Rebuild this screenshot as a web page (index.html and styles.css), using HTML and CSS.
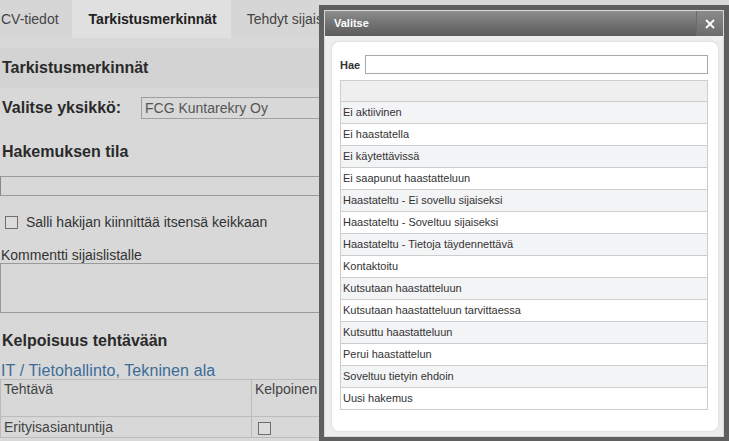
FILE: index.html
```html
<!DOCTYPE html>
<html lang="fi">
<head>
<meta charset="utf-8">
<title>Tarkistusmerkinnät</title>
<link rel="stylesheet" href="styles.css">
</head>
<body>
<div class="page">
  <nav class="tabs">
    <div class="tab first">CV-tiedot</div>
    <div class="tab active">Tarkistusmerkinnät</div>
    <div class="tab">Tehdyt sijaisuudet</div>
  </nav>
  <h2 class="section-title">Tarkistusmerkinnät</h2>
  <div class="unit-row">
    <span class="unit-label">Valitse yksikkö:</span>
    <div class="select">FCG Kuntarekry Oy</div>
  </div>
  <h3 class="heading status-heading">Hakemuksen tila</h3>
  <div class="text-input"></div>
  <div class="check-row"><span class="checkbox"></span><span>Salli hakijan kiinnittää itsensä keikkaan</span></div>
  <div class="field-label">Kommentti sijaislistalle</div>
  <div class="textarea"></div>
  <h3 class="heading qual-heading">Kelpoisuus tehtävään</h3>
  <div class="link">IT / Tietohallinto, Tekninen ala</div>
  <table class="tasks">
    <tr class="head"><td class="c1">Tehtävä</td><td class="c2">Kelpoinen</td></tr>
    <tr class="row"><td class="c1">Erityisasiantuntija</td><td class="c2"><span class="checkbox"></span></td></tr>
  </table>
</div>

<div class="dialog">
  <div class="dialog-inner">
    <div class="titlebar">
      <span class="title">Valitse</span>
      <span class="close"><svg width="10" height="10" viewBox="0 0 10 10"><path d="M1 1 L9 9 M9 1 L1 9" stroke="#ffffff" stroke-width="1.8" fill="none"/></svg></span>
    </div>
    <div class="dialog-body">
      <div class="panel">
        <div class="search-row">
          <span class="search-label">Hae</span>
          <div class="search-input"></div>
        </div>
        <div class="list">
          <div class="list-head"></div>
          <div class="item">Ei aktiivinen</div>
          <div class="item">Ei haastatella</div>
          <div class="item">Ei käytettävissä</div>
          <div class="item">Ei saapunut haastatteluun</div>
          <div class="item">Haastateltu - Ei sovellu sijaiseksi</div>
          <div class="item">Haastateltu - Soveltuu sijaiseksi</div>
          <div class="item">Haastateltu - Tietoja täydennettävä</div>
          <div class="item">Kontaktoitu</div>
          <div class="item">Kutsutaan haastatteluun</div>
          <div class="item">Kutsutaan haastatteluun tarvittaessa</div>
          <div class="item">Kutsuttu haastatteluun</div>
          <div class="item">Perui haastattelun</div>
          <div class="item">Soveltuu tietyin ehdoin</div>
          <div class="item">Uusi hakemus</div>
        </div>
      </div>
    </div>
  </div>
</div>
</body>
</html>
```

FILE: styles.css
```css
* { box-sizing: border-box; }
html, body { margin: 0; padding: 0; }
body {
  width: 729px;
  height: 441px;
  overflow: hidden;
  position: relative;
  background: #d8d8d8;
  font-family: "Liberation Sans", Arial, sans-serif;
  color: #333;
}
.page { width: 319px; overflow: hidden; }

.tabs { display: flex; height: 38px; background: #d6d6d6; }
.tab { padding: 0 16px; line-height: 38px; font-size: 14px; color: #444; white-space: nowrap; }
.tab.first { padding: 0 13px 0 1px; }
.tab.active { background: #e0e0e0; font-weight: bold; color: #222; padding: 0 14px 0 17px; }

.section-title {
  margin: 10px 0 0;
  height: 40px;
  line-height: 40px;
  font-size: 16px;
  font-weight: bold;
  padding-left: 2px;
  background: #d3d3d3;
  color: #2a2a2a;
}

.unit-row { display: flex; align-items: center; margin-top: 9px; height: 22px; }
.unit-label { font-size: 16px; font-weight: bold; padding-left: 2px; width: 141px; flex: none; color: #2a2a2a; }
.select {
  flex: none;
  width: 320px; height: 22px; border: 1px solid #a0a0a0;
  font-size: 14px; color: #555; line-height: 20px; padding-left: 3px;
}

.heading { margin: 0; font-size: 16px; font-weight: bold; line-height: 20px; padding-left: 2px; color: #2a2a2a; }
.status-heading { margin-top: 23px; }
.text-input { margin-top: 14px; width: 500px; height: 20px; border: 1px solid #9a9a9a; border-left-color: #888; }

.check-row { display: flex; align-items: center; margin-top: 19px; height: 14px; font-size: 14px; color: #333; }
.check-row .checkbox { margin: 0 8px 0 5px; flex: none; }
.checkbox { display: inline-block; width: 13px; height: 13px; border: 1px solid #6e6e6e; background: #dcdcdc; }

.field-label { margin-top: 18px; font-size: 14px; line-height: 16px; padding-left: 1px; color: #333; }
.textarea { width: 500px; height: 50px; border: 1px solid #9a9a9a; }

.qual-heading { margin-top: 18px; }
.link { margin-top: 11px; font-size: 16px; line-height: 17px; color: #3b6c98; padding-left: 1px; letter-spacing: 0.1px; }

.tasks { border-collapse: collapse; width: 500px; font-size: 14px; color: #444; }
.tasks td { border: 1px solid #bcbcbc; padding: 0 3px; }
.tasks .c1 { width: 251px; }
.tasks .head td { height: 37px; vertical-align: top; padding-top: 1px; }
.tasks .row td { height: 21px; vertical-align: middle; }
.tasks .row .c2 { padding-left: 6px; }
.tasks .row .checkbox { vertical-align: middle; }

/* dialog */
.dialog {
  position: absolute;
  left: 319px;
  top: 5px;
  width: 410px;
  height: 436px;
  background: #5f5f5f;
  padding: 5px 5px 4px 5px;
}
.dialog-inner {
  height: 100%;
  border: 1px solid #d8d8d8;
  background: #eeeeee;
  display: flex;
  flex-direction: column;
}
.titlebar {
  height: 25px;
  display: flex;
  align-items: center;
  justify-content: space-between;
  background: linear-gradient(#8e8e8e, #727272 50%, #5c5c5c);
}
.title { color: #fff; font-weight: bold; font-size: 11px; padding-left: 9px; padding-bottom: 2px; }
.close {
  width: 27px; height: 25px;
  display: flex; align-items: center; justify-content: center;
  border-left: 1px solid #6a6a6a;
  background: linear-gradient(#8a8a8a, #6c6c6c);
}
.dialog-body { flex: 1; padding: 6px 5px 5px 7px; }
.panel {
  height: 100%;
  background: #fff;
  border-radius: 7px;
  box-shadow: 0 0 3px rgba(0,0,0,0.12);
  padding: 13px 10px 0 8px;
}
.search-row { display: flex; align-items: center; height: 19px; }
.search-label { font-size: 11px; font-weight: bold; color: #333; width: 25px; }
.search-input { flex: 1; height: 19px; border: 1px solid #a9a9a9; }

.list { margin-top: 6px; border: 1px solid #cdcdcd; border-bottom: none; }
.list-head { height: 21px; background: #efefef; border-bottom: 1px solid #cdcdcd; }
.item {
  height: 22px;
  line-height: 21px;
  border-bottom: 1px solid #cdcdcd;
  font-size: 11px;
  color: #333;
  padding-left: 2px;
  background: #fff;
}
.item:nth-child(even) { background: #f3f4f5; }
```
